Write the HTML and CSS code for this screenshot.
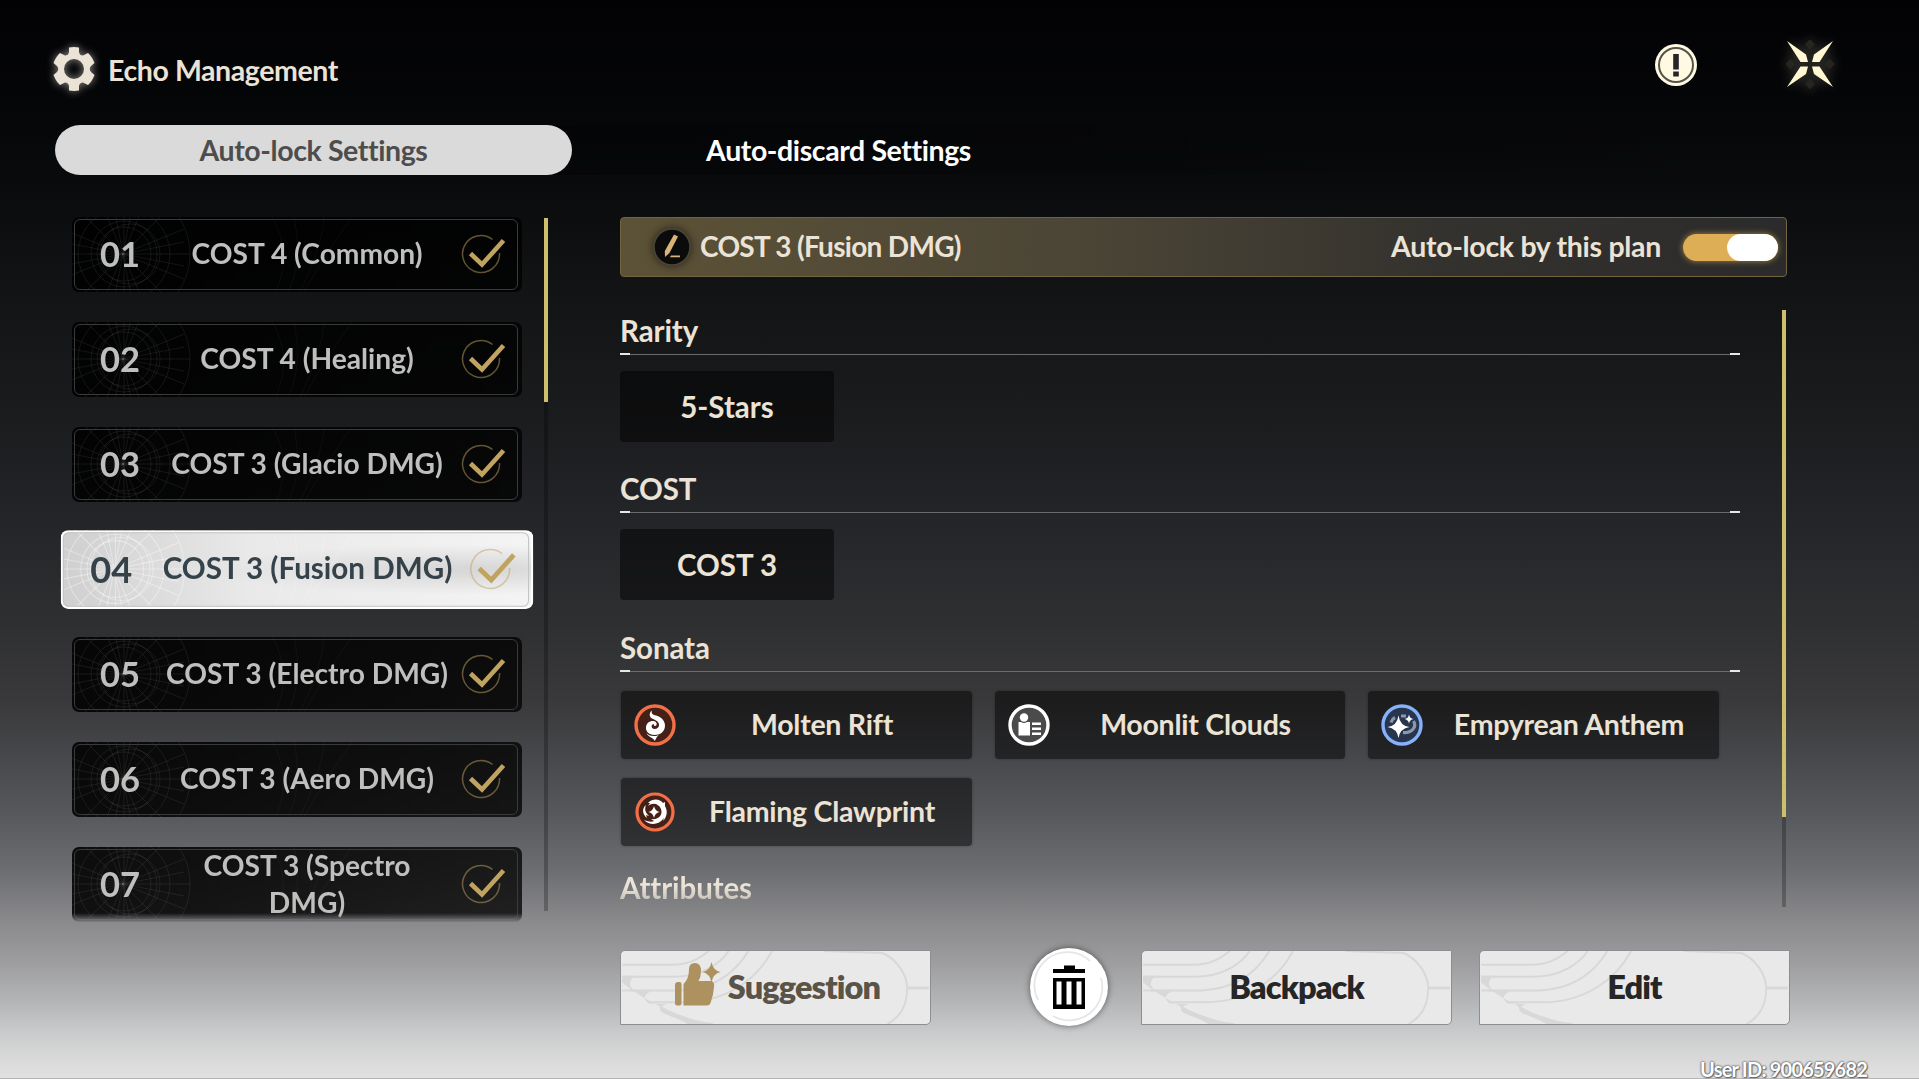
FILE: index.html
```
<!DOCTYPE html>
<html lang="en">
<head>
  <meta charset="UTF-8">
  <meta name="viewport" content="width=device-width, initial-scale=1.0">
  <title>Echo Management</title>
  <link rel="stylesheet" href="styles.css">
</head>
<body>
  <svg class="defs" width="0" height="0">
    <symbol id="check" viewBox="0 0 48 44">
      <path d="M31.5 6.5A18.5 18.5 0 1 0 38.5 20" fill="none" stroke="#c0a361" stroke-opacity="0.5" stroke-width="1.5"/>
      <path d="M9.5 20.5L21 31.5L42.5 7.5" fill="none" stroke="#c0a361" stroke-width="4.6"/>
    </symbol>
    <symbol id="web" viewBox="0 0 300 75" preserveAspectRatio="none">
      <g fill="none" stroke="currentColor" stroke-width="1">
        <circle cx="52" cy="37" r="27"/>
        <circle cx="52" cy="37" r="33"/>
        <circle cx="52" cy="37" r="46"/>
        <circle cx="52" cy="37" r="66"/>
        <circle cx="58" cy="37" r="30"/>
        <path d="M-15 37H118M52 -10V85M4 -10L98 84M98 -10L4 84M-10 12L112 62M-10 62L112 12M26 -22L76 96M76 -22L26 96M40 -20L62 94M62 -20L40 94M-10 25L112 49M-10 49L112 25"/>
        <path d="M200 0C215 25 214 50 204 75M222 0C228 30 226 55 216 75M252 0C250 25 240 50 228 75M280 0C262 25 246 50 232 75" stroke-opacity="0.5"/>
      </g>
    </symbol>
    <symbol id="swirl" viewBox="0 0 311 74">
      <g fill="none" stroke="#d8d8d8" stroke-width="2">
        <path d="M0 14H50C70 14 80 6 88 0"/>
        <path d="M0 26H52C82 26 100 12 108 0"/>
        <path d="M8 40H60C96 38 116 20 128 0"/>
        <path d="M26 52H62C104 52 136 30 152 0"/>
        <path d="M0 40H12"/>
        <path d="M205 0L264 2C276 7 289 22 289 38C289 54 282 67 269 74"/>
        <path d="M289 37.500H311" stroke-width="3"/>
        <path d="M38 56C55 67 75 73 92 74"/>
      </g>
      <path d="M0 25H14C6 28 6 38 14 40L30 41C22 43 20 50 28 53L46 54C38 56 36 60 42 63C50 67 62 70 66 74H92C50 66 20 48 0 32Z" fill="#d8d8d8"/>
    </symbol>
  </svg>

  <div class="page">
    <header class="top">
      <svg class="gear" viewBox="0 0 44 44">
        <path fill="#ebe3d5" fill-rule="evenodd" d="M17 0.500Q22 -0.300 27 0.500V5Q27.500 8.500 31 8.500L36 6Q40 9.500 42.500 16L39 19Q36.500 22 39 25L42.500 28Q40 34.500 36 38L31 35.500Q27.500 35.500 27 39V43.500Q22 44.300 17 43.500V39Q16.500 35.500 13 35.500L8 38Q4 34.500 1.500 28L5 25Q7.500 22 5 19L1.500 16Q4 9.500 8 6L13 8.500Q16.500 8.500 17 5ZM22 12A10 10 0 1 0 22 32A10 10 0 1 0 22 12Z"/>
      </svg>
      <h1>Echo Management</h1>
      <svg class="info" viewBox="0 0 44 44">
        <circle cx="22" cy="22" r="21" fill="#fffae1"/>
        <circle cx="22" cy="22" r="17" fill="none" stroke="#55534a" stroke-width="2"/>
        <path d="M19.200 11H24.800V26.500H19.200ZM19.200 28.500H24.800V33.500H19.200Z" fill="#26262a"/>
      </svg>
      <svg class="close" viewBox="0 0 50 50">
        <path d="M25 -1L30 4.500L25 10L20 4.500ZM25 38.500L30 44L25 49.500L20 44ZM5.500 18.500L10.500 24L5.500 29.500L0.500 24ZM44.500 18.500L49.500 24L44.500 29.500L39.500 24Z" fill="#26251f"/>
        <path d="M2 1L21 14.500L23 22H15.500ZM48 1L29 14.500L27 22H34.500ZM2 47L21 34L23 26.500H15.500ZM48 47L29 34L27 26.500H34.500Z" fill="#fff8d2"/>
      </svg>
    </header>

    <nav class="tabs">
      <div class="tab active"><span>Auto-lock Settings</span></div>
      <div class="tab"><span>Auto-discard Settings</span></div>
    </nav>

    <main class="main">
      <section class="plans">
        <div class="plan-list" id="planList"></div>
        <div class="scrollbar left"><div class="thumb"></div></div>
      </section>

      <section class="detail">
        <div class="plan-head">
          <svg class="pen" viewBox="0 0 40 40">
            <circle cx="20" cy="20" r="18" fill="#0b0b0b" stroke="#4b4737" stroke-width="1.500"/>
            <path d="M22 7.500L26 9.500L17.500 26L13 30L12.800 24Z" fill="#d8b476"/>
            <path d="M19 28.500H28V30.200H18Z" fill="#d8b476"/>
          </svg>
          <span class="plan-title">COST 3 (Fusion DMG)</span>
          <span class="plan-lock">Auto-lock by this plan</span>
          <div class="toggle"><div class="knob"></div></div>
        </div>

        <div class="detail-body">
          <div class="groups">
            <div class="group">
              <h2><span>Rarity</span></h2>
              <div class="box">5-Stars</div>
            </div>
            <div class="group">
              <h2><span>COST</span></h2>
              <div class="box">COST 3</div>
            </div>
            <div class="group sonata">
              <h2><span>Sonata</span></h2>
              <div class="chips">
                <div class="chip">
                  <svg class="icon" viewBox="0 0 42 42">
                    <circle cx="21" cy="21" r="19" fill="#452016" stroke="#f27048" stroke-width="3.400"/>
                    <path d="M18 6.500C17 9 18 10 20 11C26 12 31 16 31 21.500C31 28 26 31 20.500 31C14.500 31 11.500 27 12 23C12.500 18.500 17 16 21 17.500C23.500 19 23 22 21 22C20 22 19.500 21 20 20C17 20 16.500 24.500 20.500 25C24 25.200 26 22 24.500 19C23.500 16.500 21 16 18 14.500C14.500 12.500 15.500 8 18 6.500Z" fill="#fff"/>
                    <path d="M12.500 29C15 32 18 32 22 32L25 31C22 33 22.500 35 20.500 37C20 33.500 14.500 34 12.500 29Z" fill="#fff"/>
                  </svg>
                  <span>Molten Rift</span>
                </div>
                <div class="chip">
                  <svg class="icon" viewBox="0 0 42 42">
                    <circle cx="21" cy="21" r="19" fill="#4b4b4b" stroke="#fff" stroke-width="3.400"/>
                    <circle cx="16" cy="13.500" r="4.200" fill="#fff"/>
                    <path d="M10.500 18H13Q16 20 19 18H22V31.500H10.500ZM24 18.500H33V21H24ZM24 23.500H33V26H24ZM24 28.500H33V31H24Z" fill="#fff"/>
                  </svg>
                  <span>Moonlit Clouds</span>
                </div>
                <div class="chip">
                  <svg class="icon" viewBox="0 0 42 42">
                    <circle cx="21" cy="21" r="19" fill="#27354f" stroke="#86b1fb" stroke-width="3.400"/>
                    <path d="M10 18.500C11 15.500 12 14.500 14 13.500M20 12H25M32.500 17C36 23 31 29 22 28.500" fill="none" stroke="#8c98aa" stroke-width="3.200"/>
                    <path d="M17.500 11.500Q19 22 28.500 23Q19 24.500 17.500 34Q16 24.500 6.500 23Q16 22 17.500 11.500ZM28 10.500Q28.700 14.500 32.500 15Q28.700 15.500 28 19.500Q27.300 15.500 23.500 15Q27.300 14.500 28 10.500Z" fill="#fff"/>
                  </svg>
                  <span>Empyrean Anthem</span>
                </div>
                <div class="chip">
                  <svg class="icon" viewBox="0 0 42 42">
                    <circle cx="21" cy="21" r="18" fill="#452016" stroke="#f27048" stroke-width="3.200"/>
                    <path d="M14 12C19 7 26 8 29 12L31 11L31 15C34 20 33 26 29 30L30 27C25 34 16 35 10 29C15 31 18 31 20 30L17 28C25 29 29 24 27 18C25 13 19 11 14 15L16 12Z" fill="#fff"/>
                    <path d="M20 15Q21 20 25.500 21Q21 22 20 27Q19 22 14.500 21Q19 20 20 15ZM12 14C10 19 12 22 15 25L12 24L13 27C8 23 8 17 12 14Z" fill="#fff"/>
                  </svg>
                  <span>Flaming Clawprint</span>
                </div>
              </div>
            </div>
            <h2 class="fading"><span>Attributes</span></h2>
          </div>
          <div class="scrollbar right"><div class="thumb"></div></div>
        </div>

        <footer class="actions">
          <button class="btn suggest">
            <svg class="pattern"><use href="#swirl"/></svg>
            <svg class="thumb-up" viewBox="0 0 46 45">
              <path d="M3 20H4.500Q6.500 20 6.500 22V41.500Q6.500 43.500 4.500 43.500H2Q0 43.500 0 41.500V23Q0 20 3 20ZM8.500 22Q14 17 14 7Q14 1 20 1Q26 1 26 9Q26 15 23.500 19H36Q40 20 39 25Q38.500 33 35.500 41Q34.500 43.500 32 43.500H8.500Z" fill="#ad9260"/>
              <path d="M36.500 0Q38 8.500 45.500 10Q38 11.500 36.500 21Q35 11.500 27.500 10Q35 8.500 36.500 0Z" fill="#ad9260"/>
            </svg>
            <span>Suggestion</span>
          </button>
          <button class="trash">
            <svg viewBox="0 0 78 78">
              <path d="M8 52A33 33 0 0 1 60 13M71 30A33 33 0 0 1 23 68" fill="none" stroke="#e6e6e6" stroke-width="1.800"/>
              <path d="M23 21H34V17.500H45V21H55V25H23ZM23 30H55V61H23Z" fill="#000"/>
              <path d="M26.500 33.500H31.500V56.500H26.500ZM36.500 33.500H41.500V56.500H36.500ZM46.500 33.500H51.500V56.500H46.500Z" fill="#fff"/>
            </svg>
          </button>
          <button class="btn backpack">
            <svg class="pattern"><use href="#swirl"/></svg>
            <span>Backpack</span>
          </button>
          <button class="btn edit">
            <svg class="pattern"><use href="#swirl"/></svg>
            <span>Edit</span>
          </button>
        </footer>
      </section>
    </main>
    <div class="user-id">User ID: 900659682</div>
  </div>

  <script>
    const plans = [
      'COST 4 (Common)',
      'COST 4 (Healing)',
      'COST 3 (Glacio DMG)',
      'COST 3 (Fusion DMG)',
      'COST 3 (Electro DMG)',
      'COST 3 (Aero DMG)',
      'COST 3 (Spectro DMG)'
    ];
    const selected = 3;
    document.getElementById('planList').innerHTML = plans.map((name, i) => `
      <div class="plan${i === selected ? ' selected' : ''}">
        <svg class="web"><use href="#web"/></svg>
        <span class="num">0${i + 1}</span>
        <span class="name">${name}</span>
        <svg class="check"><use href="#check"/></svg>
      </div>`).join('');
  </script>
</body>
</html>
```
FILE: styles.css
```
* {
  margin: 0;
  padding: 0;
  box-sizing: border-box;
}

body {
  font-family: Lato, "Open Sans", sans-serif;
  font-weight: 700;
  font-size: 28.5px;
  font-variant-ligatures: none;
  color: #ebe3d5;
  height: 1079px;
  overflow: hidden;
  background: linear-gradient(to bottom, #020205 0, #050608 110px, #0b0c0e 200px, #121416 300px, #1b1c1e 420px, #242528 520px, #2e2f31 620px, #39393b 700px, #454649 750px, #56575b 810px, #6c6d70 870px, #89898c 920px, #9c9c9e 960px, #b3b4b6 1000px, #cbcccd 1035px, #dcdcdc 1065px, #e1e1e1 1079px);
}

.defs {
  position: absolute;
}

.page {
  position: relative;
  height: 1079px;
  padding: 0 55px;
  border-bottom: 1px solid #b5b5b5;
}

.top {
  display: flex;
  height: 125px;
}

.gear {
  width: 44px;
  height: 44px;
  margin: 47px 0 0 -3px;
  filter: drop-shadow(0 0 4px rgba(235, 227, 213, 0.6));
}

h1 {
  font-size: 28.5px;
  line-height: 34px;
  letter-spacing: -0.4px;
  margin: 53px 0 0 12px;
  flex: 1;
}

.info {
  width: 44px;
  height: 44px;
  margin: 43px 0 0;
}

.close {
  width: 50px;
  height: 50px;
  margin: 40px 29px 0 87px;
  filter: drop-shadow(0 0 6px rgba(255, 248, 210, 0.3));
}

.tabs {
  display: flex;
  height: 50px;
  gap: 8px;
  border-radius: 25px;
  background: linear-gradient(to right, rgba(0, 0, 0, 0.5), transparent);
}

.tab {
  width: 517px;
  line-height: 50px;
  letter-spacing: -0.4px;
  text-align: center;
  color: #fff;
}

.tab.active {
  background-color: #dadada;
  color: #4d4d4d;
  border-radius: 25px;
}

.main {
  display: flex;
}

.plans {
  display: flex;
  width: 565px;
  padding-top: 42px;
}

.plan-list {
  display: flex;
  flex-direction: column;
  gap: 30px;
  width: 484px;
  height: 705px;
  padding-left: 17px;
  -webkit-mask-image: linear-gradient(to bottom, #000 696px, transparent 706px);
  mask-image: linear-gradient(to bottom, #000 696px, transparent 706px);
}

.plan {
  position: relative;
  display: flex;
  align-items: center;
  flex: none;
  width: 450px;
  height: 75px;
  border-radius: 7px;
  background-color: rgba(0, 0, 0, 0.76);
  background-image: linear-gradient(to right, rgba(0, 0, 0, 0.5), transparent);
  color: #bfc0be;
}

.plan::after {
  content: "";
  position: absolute;
  inset: 2px 4px 2px 2px;
  border: 1.5px solid #3a3a3a;
  border-radius: 6px;
}

.web {
  position: absolute;
  left: 0;
  top: 0;
  width: 300px;
  height: 75px;
  color: rgba(255, 255, 255, 0.07);
}

.num {
  width: 92px;
  padding: 0 0 2px 4px;
  text-align: center;
  font-size: 34.5px;
  position: relative;
}

.name {
  width: 286px;
  padding-bottom: 2px;
  text-align: center;
  font-size: 28.2px;
  line-height: 37px;
  position: relative;
}

.check {
  width: 48px;
  height: 44px;
  margin-left: 11px;
}

.plan.selected {
  transform: scale(1.05);
  background: radial-gradient(ellipse at 85% 50%, #d8d8d8 5%, rgba(216, 216, 216, 0) 45%), linear-gradient(to right, #cfcfcf, #e9e9e9 40%, #f4f4f4);
  box-shadow: inset 0 0 0 2px #fff;
  color: #35424a;
}

.plan.selected::after {
  border-color: #c4c4c4;
}

.plan.selected .web {
  color: rgba(255, 255, 255, 0.38);
}

.scrollbar {
  width: 4px;
  background-color: rgba(0, 0, 0, 0.25);
}

.scrollbar .thumb {
  background-color: #cfbe6c;
}

.scrollbar.left {
  height: 693px;
  margin: 1px 0 0 5px;
}

.scrollbar.left .thumb {
  height: 184px;
}

.detail {
  width: 1170px;
  padding-top: 42px;
}

.plan-head {
  display: flex;
  align-items: center;
  width: 1167px;
  height: 60px;
  padding: 0 8px 0 31px;
  border: 1px solid #72643f;
  border-radius: 4px;
  background: linear-gradient(to right, #5c5236, #4b4536 40%, #34322e 70%, #2b2b2b);
}

.pen {
  width: 40px;
  height: 40px;
  filter: drop-shadow(0 0 4px rgba(0, 0, 0, 0.6));
}

.plan-title {
  flex: 1;
  margin: 0 0 2px 8px;
  font-size: 28px;
  letter-spacing: -0.7px;
}

.plan-lock {
  margin: 0 22px 2px 0;
  letter-spacing: -0.3px;
}

.toggle {
  display: flex;
  justify-content: flex-end;
  width: 95px;
  height: 27px;
  border-radius: 14px;
  background-color: #deae57;
  box-shadow: 0 0 6px rgba(222, 174, 87, 0.7);
}

.knob {
  width: 51px;
  border-radius: 14px;
  background-color: #fff;
}

.detail-body {
  display: flex;
  height: 630px;
  padding-top: 33px;
}

.groups {
  width: 1162px;
  height: 597px;
}

.group {
  height: 158.4px;
}

.group.sonata {
  height: 240px;
}

h2 {
  position: relative;
  width: 1120px;
  height: 45px;
  padding-top: 3px;
  font-size: 29.5px;
  line-height: 36px;
  letter-spacing: -0.1px;
  border-bottom: 1px solid #6a6c6c;
}

/* bright ticks on both ends of the divider */
h2::before,
h2::after {
  content: "";
  position: absolute;
  bottom: -1px;
  width: 10px;
  height: 2px;
  background-color: #e6e8e8;
}

h2::before {
  left: 0;
}

h2::after {
  right: 0;
}

h2.fading {
  border: none;
  color: transparent;
  background: linear-gradient(to bottom, #ebe3d5 20px, #bab6b0 38px);
  -webkit-background-clip: text;
  background-clip: text;
}

h2.fading::before,
h2.fading::after {
  display: none;
}

.box {
  width: 214px;
  height: 71px;
  margin-top: 16px;
  border-radius: 4px;
  background-color: rgba(0, 0, 0, 0.5);
  text-align: center;
  font-size: 29.5px;
  line-height: 71px;
}

.chips {
  display: flex;
  flex-wrap: wrap;
  gap: 19px 23px;
  padding: 19px 0 0 1px;
}

.chip {
  display: flex;
  align-items: center;
  width: 350.5px;
  height: 68px;
  padding-left: 13px;
  border-radius: 4px;
  background-color: rgba(0, 0, 0, 0.5);
  box-shadow: 0 0 3px rgba(0, 0, 0, 0.3);
}

.icon {
  width: 42px;
  height: 42px;
}

.chip span {
  width: 292px;
  padding-bottom: 2px;
  text-align: center;
  letter-spacing: -0.25px;
}

.scrollbar.right {
  height: 597px;
}

.scrollbar.right .thumb {
  height: 507px;
}

.actions {
  display: flex;
  align-items: center;
  margin-top: 41px;
}

.btn {
  position: relative;
  display: flex;
  align-items: center;
  justify-content: center;
  width: 311px;
  height: 75px;
  border: 1.5px solid #8e8e90;
  border-radius: 5px 0 5px 0;
  background-color: #e9e9e9;
  font-family: inherit;
  font-weight: 800;
  font-size: 32.5px;
  font-variant-ligatures: none;
  letter-spacing: -0.9px;
  color: #262626;
}

.btn span {
  position: relative;
  padding-bottom: 2px;
}

.pattern {
  position: absolute;
  inset: 0;
  width: 100%;
  height: 100%;
}

.suggest span {
  color: #5a5348;
}

.thumb-up {
  position: relative;
  width: 46px;
  height: 45px;
  margin: -6px 7px 0 4px;
}

.trash {
  width: 78px;
  height: 78px;
  margin: 0 33px 0 99px;
  border: none;
  border-radius: 50%;
  background-color: #fff;
  box-shadow: 0 0 6px rgba(0, 0, 0, 0.5);
}

.edit {
  margin-left: 27px;
}

.user-id {
  position: absolute;
  right: 52px;
  bottom: -4px;
  font-size: 20px;
  line-height: 26px;
  letter-spacing: -0.8px;
  color: #fff;
  text-shadow: 0 0 2px #555, 0 0 2px #555, 1px 1px 1px #777;
}
```
